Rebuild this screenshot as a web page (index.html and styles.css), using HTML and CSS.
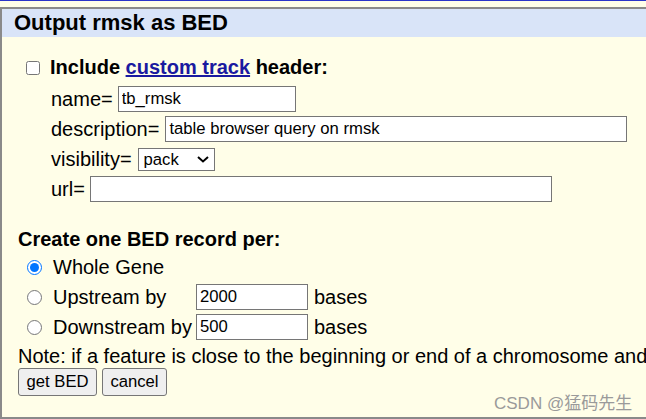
FILE: index.html
```html
<!DOCTYPE html>
<html>
<head>
<meta charset="utf-8">
<link rel="stylesheet" href="styles.css">
</head>
<body>
<div class="topline"></div>
<div class="box">
  <div class="hdr">Output rmsk as BED</div>
  <div class="content">
    <div class="incl">
      <input type="checkbox" class="cb">
      <span class="b">Include <a href="#" class="lnk">custom track</a> header:</span>
    </div>
    <div class="fields">
      <div class="row"><span>name=</span><input class="txt w-name" type="text" value="tb_rmsk"></div>
      <div class="row"><span>description=</span><input class="txt w-desc" type="text" value="table browser query on rmsk"></div>
      <div class="row"><span>visibility=</span><span class="selwrap"><select class="sel"><option>pack</option></select><svg class="chev" width="12" height="7" viewBox="0 0 12 7"><path d="M1 1 L6 5.5 L11 1" fill="none" stroke="#000" stroke-width="2"/></svg></span></div>
      <div class="row"><span>url=</span><input class="txt w-url" type="text" value=""></div>
    </div>
    <div class="create b">Create one BED record per:</div>
    <div class="radios">
      <div class="rrow"><input type="radio" name="r" class="rd" checked><span class="rlabel">Whole Gene</span></div>
      <div class="rrow"><input type="radio" name="r" class="rd"><span class="rlabel">Upstream by</span><input class="txt w-num" type="text" value="2000"><span class="bases">bases</span></div>
      <div class="rrow"><input type="radio" name="r" class="rd"><span class="rlabel">Downstream by</span><input class="txt w-num" type="text" value="500"><span class="bases">bases</span></div>
    </div>
    <div class="note">Note: if a feature is close to the beginning or end of a chromosome and</div>
    <div class="btns">
      <button class="btn w-get">get BED</button>
      <button class="btn w-cancel">cancel</button>
    </div>
  </div>
</div>
<div class="wm">CSDN @猛码先生</div>
</body>
</html>
```
FILE: styles.css
```css
html, body {
  margin: 0;
  padding: 0;
}
body {
  background: #fffee8;
  font-family: "Liberation Sans", Arial, sans-serif;
  font-size: 20px;
  color: #000;
  width: 646px;
  height: 419px;
  overflow: hidden;
  position: relative;
}
.topline {
  height: 1px;
  background: #2a34c8;
}
.box {
  margin-top: 6px;
  width: 760px;
  height: 408px;
  border-top: 2px solid #8a8a8a;
  border-left: 2px solid #8a8a8a;
  border-bottom: 2px solid #8a8a8a;
  background: #fffee8;
}
.hdr {
  height: 28px;
  line-height: 28px;
  background: #d9e4f8;
  font-weight: bold;
  font-size: 22px;
  padding-left: 12px;
}
.content {
  padding-left: 16px;
}
.b {
  font-weight: bold;
}
.incl {
  margin-top: 18px;
  height: 24px;
  line-height: 24px;
  display: flex;
  align-items: center;
}
.cb {
  margin: 0 10px 0 8px;
  width: 14px;
  height: 14px;
  position: relative;
  top: 1px;
}
.lnk {
  color: #1a1aa0;
  text-decoration: underline;
}
.fields {
  margin-top: 5px;
  padding-left: 33px;
}
.row {
  height: 30px;
  line-height: 24px;
  display: flex;
  align-items: center;
  gap: 5px;
}
.txt {
  box-sizing: border-box;
  height: 26px;
  border: 1px solid #767676;
  border-radius: 0;
  padding: 0 3px;
  margin: 0;
  font-family: "Liberation Sans", Arial, sans-serif;
  font-size: 16.67px;
  background: #fff;
  color: #000;
}
.w-name { width: 178px; }
.w-desc { width: 462px; margin-left: 1px; }
.w-url { width: 462px; }
.w-num { width: 112px; }
.selwrap {
  position: relative;
  display: inline-flex;
  margin-left: 1px;
}
.sel {
  -webkit-appearance: none;
  appearance: none;
  box-sizing: border-box;
  width: 77px;
  height: 23px;
  margin: 0;
  border: 1px solid #767676;
  border-radius: 0;
  padding: 0 0 0 5px;
  font-family: "Liberation Sans", Arial, sans-serif;
  font-size: 16.67px;
  background: #fff;
  color: #000;
}
.chev {
  position: absolute;
  left: 59px;
  top: 8px;
  pointer-events: none;
}
.create {
  margin-top: 23px;
  height: 24px;
  line-height: 24px;
}
.radios {
  margin-top: 1px;
}
.rrow {
  height: 30px;
  line-height: 24px;
  display: flex;
  align-items: center;
}
.rd {
  margin: 0 11px 0 9px;
  width: 15px;
  height: 15px;
  accent-color: #0075ff;
}
.rlabel {
  width: 143px;
}
.bases {
  margin-left: 6px;
}
.note {
  margin-top: 2px;
  height: 24px;
  line-height: 24px;
  white-space: nowrap;
}
.btns {
  display: flex;
  gap: 5px;
}
.btn {
  box-sizing: border-box;
  height: 28px;
  padding: 0;
  margin: 0;
  border: 1px solid #767676;
  border-radius: 3px;
  background: #efefef;
  font-family: "Liberation Sans", Arial, sans-serif;
  font-size: 16.67px;
  color: #000;
}
.w-get { width: 79px; }
.w-cancel { width: 65px; }
.wm {
  position: absolute;
  left: 494px;
  top: 389px;
  font-family: "Liberation Sans", "Noto Sans CJK SC", sans-serif;
  font-size: 17px;
  color: #9a9a9a;
  white-space: nowrap;
}
```
